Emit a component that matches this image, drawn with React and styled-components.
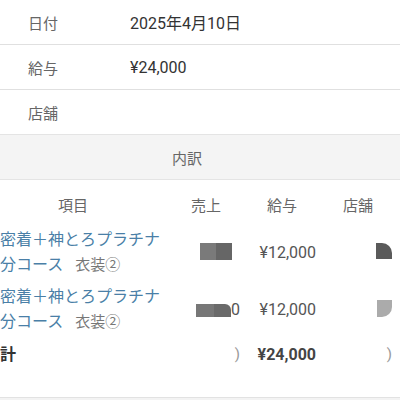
import React from 'react';
import styled, { createGlobalStyle } from 'styled-components';

const GlobalStyle = createGlobalStyle`
    html, body {
        margin: 0;
        padding: 0;
        background: #f3f3f3;
    }
    body {
        font-family: Roboto, "Noto Sans CJK JP", sans-serif;
        overflow: hidden;
    }
`;

const Page = styled.div`
    width: 400px;
    background: #fff;
    overflow: hidden;
    border-bottom: 1px solid #e2e2e2;
`;

const InfoRow = styled.div`
    display: grid;
    grid-template-columns: 102px 1fr;
    align-items: center;
    height: 44px;
    padding-left: 28px;
    border-bottom: ${props => (props.last ? 'none' : '1px solid #e0e0e0')};
`;

const Label = styled.span`
    font-size: 15px;
    color: #666;
`;

const Value = styled.span`
    font-size: 16px;
    color: #333;
`;

const Breakdown = styled.div`
    width: 426px;
    margin-left: -26px;
`;

const Band = styled.div`
    display: flex;
    align-items: center;
    justify-content: center;
    height: 44px;
    background: #f4f4f4;
    border-top: 1px solid #e4e4e4;
    border-bottom: 1px solid #e4e4e4;
    font-size: 15px;
    color: #666;
`;

const Table = styled.div`
    display: grid;
    grid-template-columns: 198px 76px 76px 76px;
    padding-bottom: 27px;
`;

const HeadCell = styled.div`
    padding: 16px ${props => (props.first ? '0' : '8px')} 8px 0;
    line-height: 20px;
    font-size: 15px;
    color: #666;
    text-align: center;
`;

const NameCell = styled.div`
    padding: ${props => (props.total ? '4px' : '3px')} 0 3px 26px;
    line-height: 25px;
    font-size: 16px;
    color: ${props => (props.total ? '#333' : '#4a7fa7')};
    font-weight: ${props => (props.total ? 700 : 400)};
    white-space: nowrap;
`;

const Costume = styled.span`
    margin-left: 12px;
    font-size: 15px;
    color: #777;
`;

const NumCell = styled.div`
    display: flex;
    align-items: center;
    justify-content: flex-end;
    padding-right: 8px;
    font-size: 16px;
    color: ${props => (props.bold ? '#444' : '#555')};
    font-weight: ${props => (props.bold ? 700 : 400)};
`;

const Redact = styled.span`
    display: inline-block;
    width: ${props => props.w}px;
    height: ${props => props.h}px;
    background: ${props => props.tone};
    border-radius: ${props => props.radius || '0'};
    margin-top: ${props => props.shift || 0}px;
`;

const Split = styled.span`
    display: inline-flex;
    margin-right: ${props => props.gap || 0}px;
`;

const Faint = styled.span`
    color: #999;
    font-size: 15px;
    font-weight: 400;
`;

const items = [
    { sales: 'a', shop: 'a' },
    { sales: 'b', shop: 'b' }
];

function SalesMask({ kind }) {
    if (kind === 'a') {
        return (
            <Split gap={8}>
                <Redact w={16} h={17} tone="#7a7a7a" shift={-2} />
                <Redact w={16} h={17} tone="#666" shift={-2} />
            </Split>
        );
    }
    return (
        <>
            <Split>
                <Redact w={18} h={13} tone="#777" shift={2} />
                <Redact w={17} h={13} tone="#6a6a6a" shift={2} radius="0 6px 0 0" />
            </Split>
            0
        </>
    );
}

function ShopMask({ kind }) {
    if (kind === 'a') {
        return <Redact w={16} h={16} tone="#5a5a5a" radius="0 10px 0 0" shift={-3} />;
    }
    return <Redact w={15} h={17} tone="#ababab" radius="0 0 10px 0" shift={-2} />;
}

export default function App() {
    return (
        <>
            <GlobalStyle />
            <Page>
                <InfoRow>
                    <Label>日付</Label>
                    <Value>2025年4月10日</Value>
                </InfoRow>
                <InfoRow>
                    <Label>給与</Label>
                    <Value>¥24,000</Value>
                </InfoRow>
                <InfoRow last>
                    <Label>店舗</Label>
                    <Value />
                </InfoRow>
                <Breakdown>
                    <Band>内訳</Band>
                    <Table>
                        <HeadCell first>項目</HeadCell>
                        <HeadCell>売上</HeadCell>
                        <HeadCell>給与</HeadCell>
                        <HeadCell>店舗</HeadCell>
                        {items.map((item, i) => (
                            <React.Fragment key={i}>
                                <NameCell>
                                    密着＋神とろプラチナ
                                    <br />
                                    分コース<Costume>衣装②</Costume>
                                </NameCell>
                                <NumCell>
                                    <SalesMask kind={item.sales} />
                                </NumCell>
                                <NumCell>¥12,000</NumCell>
                                <NumCell>
                                    <ShopMask kind={item.shop} />
                                </NumCell>
                            </React.Fragment>
                        ))}
                        <NameCell total>計</NameCell>
                        <NumCell bold>
                            <Faint>)</Faint>
                        </NumCell>
                        <NumCell bold>¥24,000</NumCell>
                        <NumCell bold>
                            <Faint>)</Faint>
                        </NumCell>
                    </Table>
                </Breakdown>
            </Page>
        </>
    );
}
